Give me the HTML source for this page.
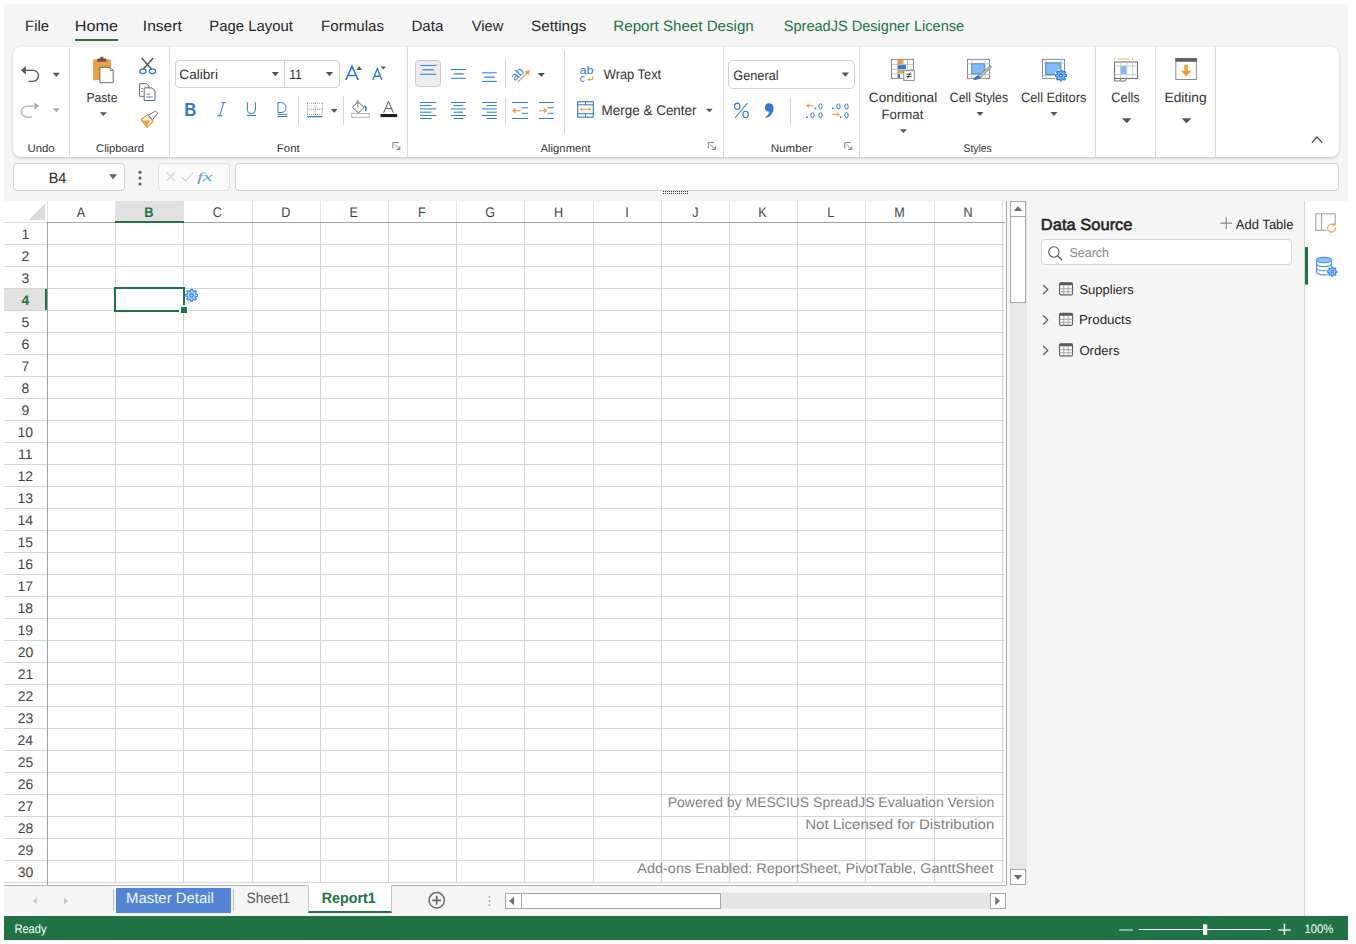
<!DOCTYPE html>
<html><head><meta charset="utf-8"><title>SpreadJS Designer</title>
<style>
html,body{margin:0;padding:0;}
body{width:1356px;height:944px;position:relative;overflow:hidden;background:#fff;font-family:"Liberation Sans",sans-serif;}
#bg>div{position:absolute;}
svg#ov{position:absolute;left:0;top:0;}
</style></head><body>
<div id="bg">
<div style="left:4px;top:4px;width:1344px;height:936px;background:#f5f5f5"></div>
<div style="left:13px;top:47px;width:1326px;height:110px;background:#fff;border-radius:8px;box-shadow:0 1px 3px rgba(0,0,0,0.22)"></div>
<div style="left:13px;top:163px;width:112px;height:28px;background:#fff;border:1px solid #cfcfcf;border-radius:4px;box-sizing:border-box"></div>
<div style="left:158px;top:163px;width:72px;height:28px;background:#fafafa;border:1px solid #e0e0e0;border-radius:4px;box-sizing:border-box"></div>
<div style="left:235px;top:163px;width:1104px;height:28px;background:#fff;border:1px solid #cfcfcf;border-radius:4px;box-sizing:border-box"></div>
<div style="left:4px;top:201px;width:1006px;height:685px;background:#fff"></div>
<div style="left:1007px;top:201px;width:3px;height:685px;background:#f9f9f9"></div>
<div style="left:1010px;top:201px;width:17px;height:684px;background:#e8e8e8"></div>
<div style="left:1305px;top:201px;width:43px;height:715px;background:#fff"></div>
<div style="left:4px;top:916px;width:1344px;height:24px;background:#217346"></div>
<div style="left:175px;top:60px;width:165px;height:28px;background:#fff;border:1px solid #cfcfcf;border-radius:4px;box-sizing:border-box"></div>
<div style="left:728px;top:60px;width:127px;height:29px;background:#fff;border:1px solid #cfcfcf;border-radius:5px;box-sizing:border-box"></div>
<div style="left:115px;top:201px;width:69px;height:20px;background:#e1e1e1"></div>
<div style="left:4px;top:289px;width:43px;height:21px;background:#e1e1e1"></div>
<div style="left:1041px;top:239px;width:251px;height:26px;background:#fff;border:1px solid #d6d6d6;border-radius:4px;box-sizing:border-box"></div>
<div style="left:116px;top:888px;width:115px;height:25px;background:#5384d6"></div>
<div style="left:308px;top:885px;width:84px;height:28px;background:#fff;border:1px solid #c6c6c6;border-top:none;border-bottom:2px solid #217346;box-sizing:border-box"></div>
<div style="left:720px;top:893px;width:280px;height:16px;background:#e6e6e6"></div>
<div style="left:505px;top:893px;width:17px;height:16px;background:#fff;border:1px solid #a6a6a6;box-sizing:border-box"></div>
<div style="left:521px;top:893px;width:200px;height:16px;background:#fff;border:1px solid #a6a6a6;box-sizing:border-box"></div>
<div style="left:990px;top:893px;width:16px;height:16px;background:#fff;border:1px solid #a6a6a6;box-sizing:border-box"></div>
<div style="left:1010px;top:201px;width:16px;height:17px;background:#fff;border:1px solid #a6a6a6;box-sizing:border-box"></div>
<div style="left:1010px;top:216px;width:16px;height:87px;background:#fff;border:1px solid #a6a6a6;box-sizing:border-box"></div>
<div style="left:1010px;top:869px;width:16px;height:16px;background:#fff;border:1px solid #a6a6a6;box-sizing:border-box"></div>
</div>
<svg id="ov" width="1356" height="944" viewBox="0 0 1356 944" font-family="Liberation Sans, sans-serif" shape-rendering="crispEdges">
<g>
<rect x="1304" y="201" width="1" height="715" fill="#d6d6d6"/>
<rect x="75" y="39" width="43" height="2" fill="#217346"/>
<rect x="69" y="47" width="1" height="110" fill="#dcdcdc"/>
<rect x="169" y="47" width="1" height="110" fill="#dcdcdc"/>
<rect x="407" y="47" width="1" height="110" fill="#dcdcdc"/>
<rect x="723" y="47" width="1" height="110" fill="#dcdcdc"/>
<rect x="859" y="47" width="1" height="110" fill="#dcdcdc"/>
<rect x="1095" y="47" width="1" height="110" fill="#dcdcdc"/>
<rect x="1155" y="47" width="1" height="110" fill="#dcdcdc"/>
<rect x="1215" y="47" width="1" height="110" fill="#dcdcdc"/>
<rect x="284" y="60" width="1" height="28" fill="#cfcfcf"/>
<rect x="47" y="244" width="958" height="1" fill="#d4d4d4"/>
<rect x="4" y="244" width="43" height="1" fill="#d4d4d4"/>
<rect x="47" y="266" width="958" height="1" fill="#d4d4d4"/>
<rect x="4" y="266" width="43" height="1" fill="#d4d4d4"/>
<rect x="47" y="288" width="958" height="1" fill="#d4d4d4"/>
<rect x="4" y="288" width="43" height="1" fill="#d4d4d4"/>
<rect x="47" y="310" width="958" height="1" fill="#d4d4d4"/>
<rect x="4" y="310" width="43" height="1" fill="#d4d4d4"/>
<rect x="47" y="332" width="958" height="1" fill="#d4d4d4"/>
<rect x="4" y="332" width="43" height="1" fill="#d4d4d4"/>
<rect x="47" y="354" width="958" height="1" fill="#d4d4d4"/>
<rect x="4" y="354" width="43" height="1" fill="#d4d4d4"/>
<rect x="47" y="376" width="958" height="1" fill="#d4d4d4"/>
<rect x="4" y="376" width="43" height="1" fill="#d4d4d4"/>
<rect x="47" y="398" width="958" height="1" fill="#d4d4d4"/>
<rect x="4" y="398" width="43" height="1" fill="#d4d4d4"/>
<rect x="47" y="420" width="958" height="1" fill="#d4d4d4"/>
<rect x="4" y="420" width="43" height="1" fill="#d4d4d4"/>
<rect x="47" y="442" width="958" height="1" fill="#d4d4d4"/>
<rect x="4" y="442" width="43" height="1" fill="#d4d4d4"/>
<rect x="47" y="464" width="958" height="1" fill="#d4d4d4"/>
<rect x="4" y="464" width="43" height="1" fill="#d4d4d4"/>
<rect x="47" y="486" width="958" height="1" fill="#d4d4d4"/>
<rect x="4" y="486" width="43" height="1" fill="#d4d4d4"/>
<rect x="47" y="508" width="958" height="1" fill="#d4d4d4"/>
<rect x="4" y="508" width="43" height="1" fill="#d4d4d4"/>
<rect x="47" y="530" width="958" height="1" fill="#d4d4d4"/>
<rect x="4" y="530" width="43" height="1" fill="#d4d4d4"/>
<rect x="47" y="552" width="958" height="1" fill="#d4d4d4"/>
<rect x="4" y="552" width="43" height="1" fill="#d4d4d4"/>
<rect x="47" y="574" width="958" height="1" fill="#d4d4d4"/>
<rect x="4" y="574" width="43" height="1" fill="#d4d4d4"/>
<rect x="47" y="596" width="958" height="1" fill="#d4d4d4"/>
<rect x="4" y="596" width="43" height="1" fill="#d4d4d4"/>
<rect x="47" y="618" width="958" height="1" fill="#d4d4d4"/>
<rect x="4" y="618" width="43" height="1" fill="#d4d4d4"/>
<rect x="47" y="640" width="958" height="1" fill="#d4d4d4"/>
<rect x="4" y="640" width="43" height="1" fill="#d4d4d4"/>
<rect x="47" y="662" width="958" height="1" fill="#d4d4d4"/>
<rect x="4" y="662" width="43" height="1" fill="#d4d4d4"/>
<rect x="47" y="684" width="958" height="1" fill="#d4d4d4"/>
<rect x="4" y="684" width="43" height="1" fill="#d4d4d4"/>
<rect x="47" y="706" width="958" height="1" fill="#d4d4d4"/>
<rect x="4" y="706" width="43" height="1" fill="#d4d4d4"/>
<rect x="47" y="728" width="958" height="1" fill="#d4d4d4"/>
<rect x="4" y="728" width="43" height="1" fill="#d4d4d4"/>
<rect x="47" y="750" width="958" height="1" fill="#d4d4d4"/>
<rect x="4" y="750" width="43" height="1" fill="#d4d4d4"/>
<rect x="47" y="772" width="958" height="1" fill="#d4d4d4"/>
<rect x="4" y="772" width="43" height="1" fill="#d4d4d4"/>
<rect x="47" y="794" width="958" height="1" fill="#d4d4d4"/>
<rect x="4" y="794" width="43" height="1" fill="#d4d4d4"/>
<rect x="47" y="816" width="958" height="1" fill="#d4d4d4"/>
<rect x="4" y="816" width="43" height="1" fill="#d4d4d4"/>
<rect x="47" y="838" width="958" height="1" fill="#d4d4d4"/>
<rect x="4" y="838" width="43" height="1" fill="#d4d4d4"/>
<rect x="47" y="860" width="958" height="1" fill="#d4d4d4"/>
<rect x="4" y="860" width="43" height="1" fill="#d4d4d4"/>
<rect x="47" y="882" width="958" height="1" fill="#d4d4d4"/>
<rect x="4" y="882" width="43" height="1" fill="#d4d4d4"/>
<rect x="115" y="222" width="1" height="661" fill="#d4d4d4"/>
<rect x="115" y="201" width="1" height="21" fill="#e4e4e4"/>
<rect x="183" y="222" width="1" height="661" fill="#d4d4d4"/>
<rect x="183" y="201" width="1" height="21" fill="#e4e4e4"/>
<rect x="252" y="222" width="1" height="661" fill="#d4d4d4"/>
<rect x="252" y="201" width="1" height="21" fill="#e4e4e4"/>
<rect x="320" y="222" width="1" height="661" fill="#d4d4d4"/>
<rect x="320" y="201" width="1" height="21" fill="#e4e4e4"/>
<rect x="388" y="222" width="1" height="661" fill="#d4d4d4"/>
<rect x="388" y="201" width="1" height="21" fill="#e4e4e4"/>
<rect x="456" y="222" width="1" height="661" fill="#d4d4d4"/>
<rect x="456" y="201" width="1" height="21" fill="#e4e4e4"/>
<rect x="524" y="222" width="1" height="661" fill="#d4d4d4"/>
<rect x="524" y="201" width="1" height="21" fill="#e4e4e4"/>
<rect x="593" y="222" width="1" height="661" fill="#d4d4d4"/>
<rect x="593" y="201" width="1" height="21" fill="#e4e4e4"/>
<rect x="661" y="222" width="1" height="661" fill="#d4d4d4"/>
<rect x="661" y="201" width="1" height="21" fill="#e4e4e4"/>
<rect x="729" y="222" width="1" height="661" fill="#d4d4d4"/>
<rect x="729" y="201" width="1" height="21" fill="#e4e4e4"/>
<rect x="797" y="222" width="1" height="661" fill="#d4d4d4"/>
<rect x="797" y="201" width="1" height="21" fill="#e4e4e4"/>
<rect x="865" y="222" width="1" height="661" fill="#d4d4d4"/>
<rect x="865" y="201" width="1" height="21" fill="#e4e4e4"/>
<rect x="934" y="222" width="1" height="661" fill="#d4d4d4"/>
<rect x="934" y="201" width="1" height="21" fill="#e4e4e4"/>
<rect x="1002" y="222" width="1" height="661" fill="#d4d4d4"/>
<rect x="1002" y="201" width="1" height="21" fill="#e4e4e4"/>
<rect x="4" y="222" width="43" height="1" fill="#d8d8d8"/>
<rect x="47" y="222" width="958" height="1" fill="#a0a0a0"/>
<rect x="47" y="222" width="1" height="663" fill="#a0a0a0"/>
<rect x="47" y="201" width="1" height="21" fill="#e4e4e4"/>
<rect x="115" y="221" width="69" height="2" fill="#217346"/>
<rect x="45" y="289" width="2" height="21" fill="#217346"/>
<rect x="1006" y="201" width="1" height="685" fill="#a6a6a6"/>
<rect x="4" y="885" width="304" height="1" fill="#b4b4b4"/>
<rect x="392" y="885" width="615" height="1" fill="#b4b4b4"/>
<polygon points="28,220 45,220 45,203" fill="#dcdcdc"/>
<rect x="115" y="288" width="69" height="23" fill="none" stroke="#217346" stroke-width="2"/>
<rect x="179" y="305" width="9" height="9" fill="#fff"/>
<rect x="181" y="307" width="6" height="6" fill="#217346"/>
<rect x="113" y="889" width="1" height="22" fill="#bdbdbd"/>
<rect x="233" y="889" width="1" height="22" fill="#bdbdbd"/>
</g>
<g shape-rendering="geometricPrecision">
<path d="M25.6,70.3 H33 A5.5,5.5 0 0 1 33,81.3 H28.4" fill="none" stroke="#555555" stroke-width="1.3"/>
<polygon points="21,70.3 25.8,66.2 25.8,74.4" fill="#555555"/>
<polygon points="52.75,72.7 59.75,72.7 56.25,76.9" fill="#555555"/>
<path d="M34.6,106.1 H27 A5.55,5.55 0 0 0 27,117.2 H32.2" fill="none" stroke="#a8aeb1" stroke-width="1.3"/>
<polygon points="39.3,106.1 34.5,102.2 34.5,110" fill="#a8aeb1"/>
<polygon points="52.75,108.2 59.75,108.2 56.25,112.2" fill="#a8aeb1"/>
<rect x="93.1" y="59.2" width="17.9" height="21" rx="1.5" fill="#eda03f"/>
<rect x="97.3" y="58.6" width="9" height="3" fill="#555555"/>
<rect x="100.3" y="56.8" width="3" height="2.5" fill="#555555"/>
<path d="M99.9,67.3 H110 L113.2,70.5 V82.7 H99.9 Z" fill="#fff" stroke="#6b6b6b" stroke-width="1"/>
<path d="M110,67.3 V70.5 H113.2" fill="none" stroke="#6b6b6b" stroke-width="0.8"/>
<polygon points="99.8,112.2 106.8,112.2 103.3,116.10000000000001" fill="#555555"/>
<path d="M141.6,58 L151.8,69.5 M153.2,58 L143,69.5" stroke="#555555" stroke-width="1.5"/>
<ellipse cx="142.9" cy="71.2" rx="3.1" ry="2.4" fill="none" stroke="#2e7bcf" stroke-width="1.3"/>
<ellipse cx="152.5" cy="71.2" rx="3.1" ry="2.4" fill="none" stroke="#2e7bcf" stroke-width="1.3"/>
<path d="M139.5,83.7 H146.5 L149,86.2 V96.3 H139.5 Z" fill="#fff" stroke="#6b6b6b" stroke-width="1"/>
<path d="M144.2,87.9 H152 L155,90.9 V100.5 H144.2 Z" fill="#fff" stroke="#6b6b6b" stroke-width="1"/>
<path d="M141.3,88.5 H143 M141.3,91.5 H143 M146.3,94.2 H150 M146.3,97 H152.5" stroke="#2e7bcf" stroke-width="0.9"/>
<path d="M141.2,119.5 L147.8,114.8 L153,121.3 L147,127.4 Z" fill="#fff" stroke="#eda03f" stroke-width="1.3" stroke-linejoin="round"/>
<path d="M142.5,120.5 L150.5,120.5 L147,126.5 Z" fill="#eda03f"/>
<path d="M148.3,115.3 L152.5,119.8 L157.8,113 L155.6,111 Z" fill="#fff" stroke="#777" stroke-width="1"/>
<polygon points="271.7,71.9 278.90000000000003,71.9 275.3,76.2" fill="#555555"/>
<polygon points="325.9,71.9 333.1,71.9 329.5,76.2" fill="#555555"/>
<path d="M345.8,80 L352,66.3 L358.2,80 M347.8,75.5 H356.2" fill="none" stroke="#2e7bcf" stroke-width="1.6"/>
<polygon points="356.6,70 359.3,66.1 362,70" fill="#555555"/>
<path d="M372.8,80 L377.3,68.6 L381.8,80 M374.2,76.2 H380.4" fill="none" stroke="#2e7bcf" stroke-width="1.4"/>
<polygon points="380.5,66.4 386,66.4 383.25,69.6" fill="#555555"/>
<text x="184.2" y="116.2" font-size="19" font-weight="bold" fill="#2e7bcf" textLength="12" lengthAdjust="spacingAndGlyphs">B</text>
<path d="M223.8,102.6 L219.6,115.8 M221.2,102.6 H226.2 M217.3,115.8 H222.2" fill="none" stroke="#2e7bcf" stroke-width="1"/>
<path d="M247.4,102.3 V109.8 A4,4 0 0 0 255.4,109.8 V102.3 M246.8,115.5 H256" fill="none" stroke="#2e7bcf" stroke-width="1"/>
<path d="M278,102.6 H281.5 A5.2,5 0 0 1 281.5,112.5 H278 Z M277.6,114.3 H287.2 M277.6,116.5 H287.2" fill="none" stroke="#2e7bcf" stroke-width="1"/>
<g fill="#9a9a9a"><rect x="307" y="102.7" width="1" height="1"/><rect x="307" y="108.7" width="1" height="1"/><rect x="307" y="114" width="1" height="1"/><rect x="309" y="102.7" width="1" height="1"/><rect x="309" y="108.7" width="1" height="1"/><rect x="309" y="114" width="1" height="1"/><rect x="311" y="102.7" width="1" height="1"/><rect x="311" y="108.7" width="1" height="1"/><rect x="311" y="114" width="1" height="1"/><rect x="313" y="102.7" width="1" height="1"/><rect x="313" y="108.7" width="1" height="1"/><rect x="313" y="114" width="1" height="1"/><rect x="315" y="102.7" width="1" height="1"/><rect x="315" y="108.7" width="1" height="1"/><rect x="315" y="114" width="1" height="1"/><rect x="317" y="102.7" width="1" height="1"/><rect x="317" y="108.7" width="1" height="1"/><rect x="317" y="114" width="1" height="1"/><rect x="319" y="102.7" width="1" height="1"/><rect x="319" y="108.7" width="1" height="1"/><rect x="319" y="114" width="1" height="1"/><rect x="321" y="102.7" width="1" height="1"/><rect x="321" y="108.7" width="1" height="1"/><rect x="321" y="114" width="1" height="1"/><rect x="307" y="102.7" width="1" height="1"/><rect x="314.5" y="102.7" width="1" height="1"/><rect x="322" y="102.7" width="1" height="1"/><rect x="307" y="104.7" width="1" height="1"/><rect x="314.5" y="104.7" width="1" height="1"/><rect x="322" y="104.7" width="1" height="1"/><rect x="307" y="106.7" width="1" height="1"/><rect x="314.5" y="106.7" width="1" height="1"/><rect x="322" y="106.7" width="1" height="1"/><rect x="307" y="108.7" width="1" height="1"/><rect x="314.5" y="108.7" width="1" height="1"/><rect x="322" y="108.7" width="1" height="1"/><rect x="307" y="110.7" width="1" height="1"/><rect x="314.5" y="110.7" width="1" height="1"/><rect x="322" y="110.7" width="1" height="1"/><rect x="307" y="112.7" width="1" height="1"/><rect x="314.5" y="112.7" width="1" height="1"/><rect x="322" y="112.7" width="1" height="1"/></g>
<rect x="307" y="116" width="15.5" height="1.3" fill="#2e7bcf"/>
<polygon points="330.90000000000003,109 337.7,109 334.3,112.8" fill="#555555"/>
<rect x="298" y="96.5" width="1" height="28.200000000000003" fill="#d6d6d6"/>
<rect x="343" y="96.5" width="1" height="28.200000000000003" fill="#d6d6d6"/>
<path d="M352.5,107.2 L358,101.8 L364,107.5 L358.5,113 Z" fill="#fff" stroke="#666" stroke-width="1"/>
<circle cx="357.5" cy="101.8" r="1.3" fill="none" stroke="#888" stroke-width="0.8"/><path d="M357.8,102.5 V107" stroke="#666" stroke-width="0.8"/>
<path d="M364,106.5 Q366.5,105.5 365.8,111" fill="none" stroke="#2e7bcf" stroke-width="1.6"/>
<rect x="351.6" y="113.5" width="17.6" height="3.8" fill="#fff" stroke="#b5b5b5" stroke-width="1"/>
<path d="M383.6,112.8 L388.5,101.4 L393.4,112.8 M385.3,108.6 H391.7" fill="none" stroke="#555" stroke-width="1"/>
<rect x="380.6" y="114" width="16.6" height="3.1" fill="#1d1d25"/>
<path d="M392.8,148.5 V142.5 H398.8" fill="none" stroke="#777" stroke-width="0.9"/><path d="M394.8,144.5 L399.8,149.5 M399.8,146.0 V149.5 H396.3" fill="none" stroke="#777" stroke-width="0.9"/>
<path d="M708.3,148.5 V142.5 H714.3" fill="none" stroke="#777" stroke-width="0.9"/><path d="M710.3,144.5 L715.3,149.5 M715.3,146.0 V149.5 H711.8" fill="none" stroke="#777" stroke-width="0.9"/>
<path d="M844.8,148.5 V142.5 H850.8" fill="none" stroke="#777" stroke-width="0.9"/><path d="M846.8,144.5 L851.8,149.5 M851.8,146.0 V149.5 H848.3" fill="none" stroke="#777" stroke-width="0.9"/>
<rect x="415.5" y="60.5" width="25" height="26" rx="3.5" fill="#ececec" stroke="#c9c9c9" stroke-width="1"/>
<rect x="420" y="64.9" width="16.30000000000001" height="1.0" fill="#2e7bcf"/>
<rect x="422.4" y="69.1" width="11.400000000000034" height="1.4" fill="#4a8ad6"/>
<rect x="420" y="73.75" width="16.30000000000001" height="1.0" fill="#2e7bcf"/>
<rect x="450.9" y="69.0" width="15.0" height="1.0" fill="#2e7bcf"/>
<rect x="453.4" y="73.2" width="10.300000000000011" height="1.4" fill="#4a8ad6"/>
<rect x="450.9" y="77.8" width="15.0" height="1.0" fill="#2e7bcf"/>
<rect x="481.9" y="72.3" width="14.900000000000034" height="1.0" fill="#2e7bcf"/>
<rect x="484.3" y="76.5" width="10.300000000000011" height="1.4" fill="#4a8ad6"/>
<rect x="481.9" y="80.9" width="14.900000000000034" height="1.0" fill="#2e7bcf"/>
<rect x="505" y="60.2" width="1" height="28.39999999999999" fill="#d6d6d6"/>
<rect x="505" y="97.2" width="1" height="26.299999999999997" fill="#d6d6d6"/>
<rect x="564" y="51" width="1" height="82" fill="#d6d6d6"/>
<text x="0" y="0" font-size="12" fill="#2e7bcf" transform="translate(515.3,81.5) rotate(-45)">ab</text>
<path d="M517.9,82 L529,71" stroke="#eda03f" stroke-width="1.1"/><polygon points="530,70 524.8,71.4 528.6,75.2" fill="#eda03f"/>
<polygon points="537.8,73.1 544.8,73.1 541.3,77.0" fill="#555555"/>
<rect x="420" y="102.0" width="16.30000000000001" height="1.0" fill="#2e7bcf"/>
<rect x="450.9" y="102.0" width="15.0" height="1.0" fill="#2e7bcf"/>
<rect x="481.9" y="102.0" width="14.900000000000034" height="1.0" fill="#2e7bcf"/>
<rect x="420" y="105.1" width="11.600000000000023" height="1.0" fill="#2e7bcf"/>
<rect x="453.6" y="105.1" width="9.599999999999966" height="1.0" fill="#2e7bcf"/>
<rect x="486.6" y="105.1" width="10.199999999999989" height="1.0" fill="#2e7bcf"/>
<rect x="420" y="108.4" width="16.30000000000001" height="1.0" fill="#2e7bcf"/>
<rect x="450.9" y="108.4" width="15.0" height="1.0" fill="#2e7bcf"/>
<rect x="481.9" y="108.4" width="14.900000000000034" height="1.0" fill="#2e7bcf"/>
<rect x="420" y="111.7" width="11.600000000000023" height="1.0" fill="#2e7bcf"/>
<rect x="453.6" y="111.7" width="9.599999999999966" height="1.0" fill="#2e7bcf"/>
<rect x="486.6" y="111.7" width="10.199999999999989" height="1.0" fill="#2e7bcf"/>
<rect x="420" y="115.0" width="16.30000000000001" height="1.0" fill="#2e7bcf"/>
<rect x="450.9" y="115.0" width="15.0" height="1.0" fill="#2e7bcf"/>
<rect x="481.9" y="115.0" width="14.900000000000034" height="1.0" fill="#2e7bcf"/>
<rect x="420" y="118.0" width="11.600000000000023" height="1.0" fill="#2e7bcf"/>
<rect x="453.6" y="118.0" width="9.599999999999966" height="1.0" fill="#2e7bcf"/>
<rect x="486.6" y="118.0" width="10.199999999999989" height="1.0" fill="#2e7bcf"/>
<rect x="512" y="102.0" width="16.100000000000023" height="1.0" fill="#2e7bcf"/>
<rect x="512" y="118.0" width="16.100000000000023" height="1.0" fill="#2e7bcf"/>
<rect x="521.7" y="107.3" width="6.399999999999977" height="1.0" fill="#2e7bcf"/>
<rect x="521.7" y="112.8" width="6.399999999999977" height="1.0" fill="#2e7bcf"/>
<path d="M513,110.7 H520.5" stroke="#eda03f" stroke-width="1.2"/><polygon points="512,110.7 515.5,107.8 515.5,113.6" fill="#eda03f"/>
<rect x="538.9" y="102.0" width="14.899999999999977" height="1.0" fill="#2e7bcf"/>
<rect x="538.9" y="118.0" width="14.899999999999977" height="1.0" fill="#2e7bcf"/>
<rect x="547.7" y="107.3" width="6.099999999999909" height="1.0" fill="#2e7bcf"/>
<rect x="547.7" y="112.8" width="6.099999999999909" height="1.0" fill="#2e7bcf"/>
<path d="M539,110.7 H546" stroke="#eda03f" stroke-width="1.2"/><polygon points="547.3,110.7 543.8,107.8 543.8,113.6" fill="#eda03f"/>
<text x="579.6" y="73.8" font-size="10" fill="#2e7bcf" textLength="14" lengthAdjust="spacingAndGlyphs">ab</text>
<text x="579.8" y="81.6" font-size="10" fill="#2e7bcf">c</text>
<path d="M592.7,76.2 V79.6 H588" fill="none" stroke="#eda03f" stroke-width="1"/><polygon points="587.4,79.6 589.6,77.8 589.6,81.4" fill="#eda03f"/>
<rect x="577.7" y="101.7" width="15.6" height="15.5" fill="#fff" stroke="#2e7bcf" stroke-width="1.1"/>
<path d="M577.7,104.8 H593.3 M577.7,113.7 H593.3 M585.5,101.7 V104.8 M585.5,113.7 V117.2" stroke="#2e7bcf" stroke-width="1"/>
<path d="M581,109.3 H590" stroke="#eda03f" stroke-width="1.1"/><polygon points="579.6,109.3 582.2,107.3 582.2,111.3" fill="#eda03f"/><polygon points="591.4,109.3 588.8,107.3 588.8,111.3" fill="#eda03f"/>
<polygon points="705.9499999999999,108.7 712.65,108.7 709.3,112.2" fill="#555555"/>
<polygon points="841.5999999999999,72.6 849.0,72.6 845.3,76.8" fill="#555555"/>
<path d="M735,118 L747.5,103" stroke="#2e7bcf" stroke-width="1.1"/><ellipse cx="737.2" cy="106.3" rx="2.7" ry="3.2" fill="none" stroke="#2e7bcf" stroke-width="1.1"/><ellipse cx="745.6" cy="114.4" rx="2.7" ry="3.2" fill="none" stroke="#2e7bcf" stroke-width="1.1"/>
<path d="M769,103.2 C774,103.2 774.5,109 772.5,112.5 C771,115.5 768.5,117.5 766,118 L765.5,117 C767.5,115.8 769,114 769.3,111.5 C766,111.5 764.8,109.5 764.8,107.4 C764.8,105 766.5,103.2 769,103.2 Z" fill="#2e7bcf"/>
<rect x="790" y="97.2" width="1" height="26.599999999999994" fill="#d6d6d6"/>
<path d="M807.5,105.8 H813.5" stroke="#eda03f" stroke-width="1.1"/><polygon points="806.1,105.8 808.8,103.6 808.8,108" fill="#eda03f"/>
<rect x="814.7" y="107.5" width="1.6" height="1.6" fill="#2e7bcf"/>
<ellipse cx="820.5" cy="106.4" rx="1.7" ry="2.6" fill="none" stroke="#2e7bcf" stroke-width="1"/>
<rect x="806.1" y="116.4" width="1.6" height="1.6" fill="#2e7bcf"/>
<ellipse cx="812.5" cy="115.2" rx="1.7" ry="2.6" fill="none" stroke="#2e7bcf" stroke-width="1"/>
<ellipse cx="820.5" cy="115.2" rx="1.7" ry="2.6" fill="none" stroke="#2e7bcf" stroke-width="1"/>
<rect x="832.0" y="107.5" width="1.6" height="1.6" fill="#2e7bcf"/>
<ellipse cx="838.5" cy="106.4" rx="1.7" ry="2.6" fill="none" stroke="#2e7bcf" stroke-width="1"/>
<ellipse cx="846.5" cy="106.4" rx="1.7" ry="2.6" fill="none" stroke="#2e7bcf" stroke-width="1"/>
<path d="M832,114.4 H838" stroke="#eda03f" stroke-width="1.1"/><polygon points="840,114.4 837.3,112.2 837.3,116.6" fill="#eda03f"/>
<rect x="840.0" y="116.4" width="1.6" height="1.6" fill="#2e7bcf"/>
<ellipse cx="846.5" cy="115.2" rx="1.7" ry="2.6" fill="none" stroke="#2e7bcf" stroke-width="1"/>
<rect x="891.5" y="59.4" width="22" height="19" fill="#fff"/>
<rect x="897" y="59.4" width="6.5" height="4.8" fill="#eda03f"/><rect x="897" y="64.2" width="9" height="4.9" fill="#2e7bcf"/><rect x="897" y="69.1" width="7" height="4.3" fill="#eda03f"/><rect x="897" y="73.4" width="3" height="5" fill="#2e7bcf"/>
<rect x="897" y="59.4" width="0.9" height="19.000000000000007" fill="#c4c4c4"/>
<rect x="907" y="59.4" width="0.9" height="19.000000000000007" fill="#c4c4c4"/>
<rect x="891.5" y="64.2" width="22.0" height="0.9" fill="#c4c4c4"/>
<rect x="891.5" y="69.1" width="22.0" height="0.9" fill="#c4c4c4"/>
<rect x="891.5" y="73.4" width="22.0" height="0.9" fill="#c4c4c4"/>
<rect x="891.5" y="59.4" width="22" height="19" fill="none" stroke="#8a8a8a" stroke-width="1"/>
<rect x="903.8" y="70.7" width="10.5" height="9.7" fill="#fff" stroke="#8a8a8a" stroke-width="1"/>
<path d="M906.5,74.2 H911.5 M906.5,76.5 H911.5 M910.5,72.5 L907.5,78.5" stroke="#333" stroke-width="0.9"/>
<polygon points="899.9,129.2 906.9,129.2 903.4,133.1" fill="#555555"/>
<rect x="967.5" y="59.4" width="22" height="19" fill="#fff" stroke="#8a8a8a" stroke-width="1"/>
<rect x="971.4" y="59.4" width="0.9" height="19.000000000000007" fill="#c4c4c4"/>
<rect x="984.7" y="59.4" width="0.9" height="19.000000000000007" fill="#c4c4c4"/>
<rect x="967.5" y="63.4" width="22.0" height="0.9" fill="#c4c4c4"/>
<rect x="967.5" y="74.1" width="22.0" height="0.9" fill="#c4c4c4"/>
<rect x="971.8" y="63.8" width="12.5" height="10" fill="#7dbcf5" stroke="#3f82d8" stroke-width="0.9"/>
<path d="M990.5,65.5 L980.5,74 L978.5,76 L981,77.5 L991.5,67 Z" fill="#bdbdbd" stroke="#777" stroke-width="0.8"/>
<path d="M978,75 Q975,76.5 973,79.6 Q977.5,80.8 980.5,77.5 Z" fill="#2e7bcf"/>
<polygon points="976.5,112 983.5,112 980,115.9" fill="#555555"/>
<rect x="1042.5" y="59.4" width="22" height="19" fill="#fff" stroke="#8a8a8a" stroke-width="1"/>
<rect x="1045.4" y="59.4" width="0.9" height="19.000000000000007" fill="#c4c4c4"/>
<rect x="1060.7" y="59.4" width="0.9" height="19.000000000000007" fill="#c4c4c4"/>
<rect x="1042.5" y="62.5" width="22.0" height="0.9" fill="#c4c4c4"/>
<rect x="1042.5" y="75" width="22.0" height="0.9" fill="#c4c4c4"/>
<rect x="1045.8" y="62.9" width="14.5" height="11.7" fill="#7dbcf5" stroke="#3f82d8" stroke-width="0.9"/>
<circle cx="1061" cy="75.5" r="6.5" fill="#fff"/>
<path d="M1064.85,74.41 L1066.54,74.66 L1066.54,76.34 L1064.85,76.59 L1064.49,77.45 L1065.51,78.82 L1064.32,80.01 L1062.95,78.99 L1062.09,79.35 L1061.84,81.04 L1060.16,81.04 L1059.91,79.35 L1059.05,78.99 L1057.68,80.01 L1056.49,78.82 L1057.51,77.45 L1057.15,76.59 L1055.46,76.34 L1055.46,74.66 L1057.15,74.41 L1057.51,73.55 L1056.49,72.18 L1057.68,70.99 L1059.05,72.01 L1059.91,71.65 L1060.16,69.96 L1061.84,69.96 L1062.09,71.65 L1062.95,72.01 L1064.32,70.99 L1065.51,72.18 L1064.49,73.55Z" fill="#7dbcf5" stroke="#2e7bcf" stroke-width="1.1" stroke-linejoin="round"/>
<circle cx="1061" cy="75.5" r="1.6" fill="none" stroke="#2e7bcf" stroke-width="1.1"/>
<polygon points="1050.5,112 1057.5,112 1054,115.9" fill="#555555"/>
<rect x="1114.5" y="62" width="23" height="16.5" fill="#fff" stroke="#6e6e6e" stroke-width="1.1"/>
<rect x="1120.5" y="65.8" width="6" height="8.5" fill="#7dbcf5"/>
<rect x="1120.2" y="62" width="0.9" height="16.5" fill="#c6c6c6"/>
<rect x="1126.3" y="62" width="0.9" height="16.5" fill="#c6c6c6"/>
<rect x="1132.3" y="62" width="0.9" height="16.5" fill="#c6c6c6"/>
<rect x="1114.5" y="65.6" width="23.0" height="0.9" fill="#c6c6c6"/>
<rect x="1114.5" y="74.3" width="23.0" height="0.9" fill="#c6c6c6"/>
<path d="M1114.5,78 V81 H1119.5 L1121,78.6 M1120,81 H1125 L1126.5,78.6" fill="none" stroke="#6e6e6e" stroke-width="1"/>
<rect x="1117.2" y="58.3" width="12" height="1.4" fill="#f3c982"/><rect x="1113.8" y="58.2" width="1.2" height="1.6" fill="#eda03f"/><rect x="1132" y="58.2" width="1.2" height="1.6" fill="#eda03f"/>
<polygon points="1121.9,118.3 1131.5,118.3 1126.7,123.3" fill="#555555"/>
<rect x="1175.8" y="58.5" width="20.6" height="21" fill="#fff" stroke="#8d8d8d" stroke-width="1"/>
<rect x="1175.4" y="58.1" width="21.4" height="3.7" fill="#655f63"/>
<rect x="1184.3" y="64.8" width="3.6" height="6.2" fill="#eda03f"/><polygon points="1180.8,70.8 1191.6,70.8 1186.2,76.6" fill="#eda03f"/>
<polygon points="1181.7,118.3 1191.3,118.3 1186.5,123.3" fill="#555555"/>
<path d="M1311.9,142.6 L1317,137 L1322.1,142.6" fill="none" stroke="#444" stroke-width="1.2"/>
<polygon points="109.0,174.3 117.0,174.3 113,179.3" fill="#666"/>
<circle cx="140" cy="172.2" r="1.5" fill="#555"/>
<circle cx="140" cy="178" r="1.5" fill="#555"/>
<circle cx="140" cy="183.9" r="1.5" fill="#555"/>
<path d="M166.2,172.3 L175,181 M175,172.3 L166.2,181" stroke="#d5d5d5" stroke-width="1.2"/>
<path d="M181.5,177 L185.5,181 L193.2,172.5" fill="none" stroke="#d5d5d5" stroke-width="1.2"/>
<text x="197" y="180.6" font-family="Liberation Serif" font-style="italic" font-size="13.5" fill="#6aa0dc" textLength="15.5" lengthAdjust="spacingAndGlyphs">fx</text>
<g fill="#333"><rect x="663" y="191" width="1" height="1"/><rect x="663" y="193" width="1" height="1"/><rect x="665" y="191" width="1" height="1"/><rect x="665" y="193" width="1" height="1"/><rect x="667" y="191" width="1" height="1"/><rect x="667" y="193" width="1" height="1"/><rect x="669" y="191" width="1" height="1"/><rect x="669" y="193" width="1" height="1"/><rect x="671" y="191" width="1" height="1"/><rect x="671" y="193" width="1" height="1"/><rect x="673" y="191" width="1" height="1"/><rect x="673" y="193" width="1" height="1"/><rect x="675" y="191" width="1" height="1"/><rect x="675" y="193" width="1" height="1"/><rect x="677" y="191" width="1" height="1"/><rect x="677" y="193" width="1" height="1"/><rect x="679" y="191" width="1" height="1"/><rect x="679" y="193" width="1" height="1"/><rect x="681" y="191" width="1" height="1"/><rect x="681" y="193" width="1" height="1"/><rect x="683" y="191" width="1" height="1"/><rect x="683" y="193" width="1" height="1"/><rect x="685" y="191" width="1" height="1"/><rect x="685" y="193" width="1" height="1"/><rect x="687" y="191" width="1" height="1"/><rect x="687" y="193" width="1" height="1"/></g>
<circle cx="191.6" cy="295.3" r="6.5" fill="#fff"/>
<path d="M195.83,294.10 L197.53,294.40 L197.53,296.20 L195.83,296.50 L195.44,297.44 L196.43,298.86 L195.16,300.13 L193.74,299.14 L192.80,299.53 L192.50,301.23 L190.70,301.23 L190.40,299.53 L189.46,299.14 L188.04,300.13 L186.77,298.86 L187.76,297.44 L187.37,296.50 L185.67,296.20 L185.67,294.40 L187.37,294.10 L187.76,293.16 L186.77,291.74 L188.04,290.47 L189.46,291.46 L190.40,291.07 L190.70,289.37 L192.50,289.37 L192.80,291.07 L193.74,291.46 L195.16,290.47 L196.43,291.74 L195.44,293.16Z" fill="#9fd0ff" stroke="#3b86e0" stroke-width="1.1" stroke-linejoin="round"/>
<circle cx="191.6" cy="295.3" r="1.7" fill="none" stroke="#3b86e0" stroke-width="1.1"/>
<polygon points="1013.8,211 1022.2,211 1018,206" fill="#6d6d6d"/>
<polygon points="1013.8,875 1022.2,875 1018,880" fill="#6d6d6d"/>
<polygon points="514,896.8 514,905.2 509.2,901" fill="#6d6d6d"/>
<polygon points="995.3,896.8 995.3,905.2 1000,901" fill="#6d6d6d"/>
<polygon points="36.8,897.5 36.8,904.5 32.7,901" fill="#c8c8c8"/>
<polygon points="64,897.5 64,904.5 68.1,901" fill="#c8c8c8"/>
<circle cx="436.7" cy="900.3" r="7.7" fill="none" stroke="#6a6a6a" stroke-width="1.5"/><path d="M432.2,900.3 H441.2 M436.7,895.8 V904.8" stroke="#6a6a6a" stroke-width="1.7"/>
<rect x="488.6" y="896.0" width="1.6" height="1.6" fill="#a0a0a0"/>
<rect x="488.6" y="900.2" width="1.6" height="1.6" fill="#a0a0a0"/>
<rect x="488.6" y="904.4000000000001" width="1.6" height="1.6" fill="#a0a0a0"/>
<path d="M1220.5,223.2 H1232 M1226.25,217.5 V229" stroke="#8a8a8a" stroke-width="1.2"/>
<circle cx="1053.9" cy="252" r="5.2" fill="none" stroke="#555" stroke-width="1.1"/><path d="M1057.6,255.7 L1062,260" stroke="#555" stroke-width="1.2"/>
<path d="M1043.2,285 L1047.8,289.5 L1043.2,294" fill="none" stroke="#555" stroke-width="1.1"/>
<rect x="1059.5" y="282.7" width="13" height="12.2" rx="1.5" fill="#fff" stroke="#5a5a5a" stroke-width="1.1"/>
<rect x="1059.5" y="282.7" width="13" height="2.6" fill="#5a5a5a"/>
<path d="M1063.8,285.2 V294.9 M1068.2,285.2 V294.9 M1059.5,288.8 H1072.5 M1059.5,291.8 H1072.5" stroke="#9a9a9a" stroke-width="0.9"/>
<path d="M1043.2,315.5 L1047.8,320.0 L1043.2,324.5" fill="none" stroke="#555" stroke-width="1.1"/>
<rect x="1059.5" y="313.2" width="13" height="12.2" rx="1.5" fill="#fff" stroke="#5a5a5a" stroke-width="1.1"/>
<rect x="1059.5" y="313.2" width="13" height="2.6" fill="#5a5a5a"/>
<path d="M1063.8,315.7 V325.4 M1068.2,315.7 V325.4 M1059.5,319.3 H1072.5 M1059.5,322.3 H1072.5" stroke="#9a9a9a" stroke-width="0.9"/>
<path d="M1043.2,346 L1047.8,350.5 L1043.2,355" fill="none" stroke="#555" stroke-width="1.1"/>
<rect x="1059.5" y="343.7" width="13" height="12.2" rx="1.5" fill="#fff" stroke="#5a5a5a" stroke-width="1.1"/>
<rect x="1059.5" y="343.7" width="13" height="2.6" fill="#5a5a5a"/>
<path d="M1063.8,346.2 V355.9 M1068.2,346.2 V355.9 M1059.5,349.8 H1072.5 M1059.5,352.8 H1072.5" stroke="#9a9a9a" stroke-width="0.9"/>
<rect x="1315.8" y="213.8" width="19.4" height="16.5" fill="none" stroke="#9a9a9a" stroke-width="1"/><path d="M1321.6,213.8 V230.3" stroke="#9a9a9a" stroke-width="1"/>
<circle cx="1331.6" cy="228.2" r="5.6" fill="#fff"/>
<path d="M1335.5,227.5 A4,4 0 1 1 1333,224.4" fill="none" stroke="#eda03f" stroke-width="1.1"/><polygon points="1333.5,222.5 1336,225 1332.6,226" fill="#eda03f"/>
<rect x="1305" y="247" width="3" height="37.6" fill="#217346"/>
<path d="M1316.6,260 V272.5 A7.5,2.8 0 0 0 1331.4,272.5 V260" fill="#fff" stroke="#4a90e2" stroke-width="1.1"/>
<path d="M1316.6,264.2 A7.5,2.8 0 0 0 1331.4,264.2 M1316.6,268.4 A7.5,2.8 0 0 0 1331.4,268.4" fill="none" stroke="#4a90e2" stroke-width="1.1"/>
<ellipse cx="1324" cy="260" rx="7.4" ry="2.6" fill="#8cc4f8" stroke="#4a90e2" stroke-width="1.1"/>
<circle cx="1332.3" cy="271.7" r="5.4" fill="#fff"/>
<path d="M1335.47,270.80 L1336.85,271.01 L1336.85,272.39 L1335.47,272.60 L1335.18,273.31 L1336.00,274.43 L1335.03,275.40 L1333.91,274.58 L1333.20,274.87 L1332.99,276.25 L1331.61,276.25 L1331.40,274.87 L1330.69,274.58 L1329.57,275.40 L1328.60,274.43 L1329.42,273.31 L1329.13,272.60 L1327.75,272.39 L1327.75,271.01 L1329.13,270.80 L1329.42,270.09 L1328.60,268.97 L1329.57,268.00 L1330.69,268.82 L1331.40,268.53 L1331.61,267.15 L1332.99,267.15 L1333.20,268.53 L1333.91,268.82 L1335.03,268.00 L1336.00,268.97 L1335.18,270.09Z" fill="#9fd0ff" stroke="#3b86e0" stroke-width="1.1" stroke-linejoin="round"/>
<circle cx="1332.3" cy="271.7" r="1.3" fill="none" stroke="#3b86e0" stroke-width="1.1"/>
<rect x="1119.2" y="929.2" width="13.8" height="1.6" fill="#a9bfb2"/>
<rect x="1138.7" y="929" width="132" height="1" fill="#ffffff"/>
<rect x="1203" y="924.3" width="4.2" height="10.7" fill="#ffffff"/>
<rect x="1278.3" y="929" width="12.3" height="2" fill="#b8c9bf"/><rect x="1283.7" y="923.7" width="1.5" height="11.3" fill="#ffffff"/>
</g>
<g text-rendering="geometricPrecision">
<text x="25.11" y="31.00" font-size="15" fill="#262626" font-weight="normal" textLength="23.90" lengthAdjust="spacingAndGlyphs" >File</text>
<text x="74.70" y="31.00" font-size="15" fill="#262626" font-weight="normal" textLength="43.29" lengthAdjust="spacingAndGlyphs" >Home</text>
<text x="142.80" y="31.00" font-size="15" fill="#262626" font-weight="normal" textLength="39.00" lengthAdjust="spacingAndGlyphs" >Insert</text>
<text x="209.31" y="31.00" font-size="15" fill="#262626" font-weight="normal" textLength="83.58" lengthAdjust="spacingAndGlyphs" >Page Layout</text>
<text x="321.09" y="31.00" font-size="15" fill="#262626" font-weight="normal" textLength="62.90" lengthAdjust="spacingAndGlyphs" >Formulas</text>
<text x="411.49" y="31.00" font-size="15" fill="#262626" font-weight="normal" textLength="31.84" lengthAdjust="spacingAndGlyphs" >Data</text>
<text x="471.83" y="31.00" font-size="15" fill="#262626" font-weight="normal" textLength="31.57" lengthAdjust="spacingAndGlyphs" >View</text>
<text x="531.01" y="31.00" font-size="15" fill="#262626" font-weight="normal" textLength="55.30" lengthAdjust="spacingAndGlyphs" >Settings</text>
<text x="613.39" y="31.00" font-size="15" fill="#217346" font-weight="normal" textLength="140.34" lengthAdjust="spacingAndGlyphs" >Report Sheet Design</text>
<text x="783.75" y="31.00" font-size="15" fill="#217346" font-weight="normal" textLength="180.36" lengthAdjust="spacingAndGlyphs" >SpreadJS Designer License</text>
<text x="27.55" y="151.50" font-size="11" fill="#333333" font-weight="normal" textLength="27.11" lengthAdjust="spacingAndGlyphs" >Undo</text>
<text x="96.04" y="151.50" font-size="11" fill="#333333" font-weight="normal" textLength="47.99" lengthAdjust="spacingAndGlyphs" >Clipboard</text>
<text x="276.89" y="151.50" font-size="11" fill="#333333" font-weight="normal" textLength="22.78" lengthAdjust="spacingAndGlyphs" >Font</text>
<text x="540.60" y="151.50" font-size="11" fill="#333333" font-weight="normal" textLength="50.08" lengthAdjust="spacingAndGlyphs" >Alignment</text>
<text x="770.67" y="151.50" font-size="11" fill="#333333" font-weight="normal" textLength="41.43" lengthAdjust="spacingAndGlyphs" >Number</text>
<text x="963.53" y="151.50" font-size="11" fill="#333333" font-weight="normal" textLength="28.21" lengthAdjust="spacingAndGlyphs" >Styles</text>
<text x="86.43" y="101.70" font-size="13" fill="#333333" font-weight="normal" textLength="31.09" lengthAdjust="spacingAndGlyphs" >Paste</text>
<text x="603.84" y="79.40" font-size="14" fill="#333333" font-weight="normal" textLength="57.29" lengthAdjust="spacingAndGlyphs" >Wrap Text</text>
<text x="601.62" y="114.80" font-size="14" fill="#333333" font-weight="normal" textLength="94.93" lengthAdjust="spacingAndGlyphs" >Merge &amp; Center</text>
<text x="868.82" y="101.80" font-size="13.5" fill="#333333" font-weight="normal" textLength="68.42" lengthAdjust="spacingAndGlyphs" >Conditional</text>
<text x="881.44" y="119.00" font-size="13.5" fill="#333333" font-weight="normal" textLength="41.95" lengthAdjust="spacingAndGlyphs" >Format</text>
<text x="949.78" y="101.80" font-size="13.5" fill="#333333" font-weight="normal" textLength="58.33" lengthAdjust="spacingAndGlyphs" >Cell Styles</text>
<text x="1020.96" y="101.80" font-size="13.5" fill="#333333" font-weight="normal" textLength="65.36" lengthAdjust="spacingAndGlyphs" >Cell Editors</text>
<text x="1111.36" y="101.90" font-size="13.5" fill="#333333" font-weight="normal" textLength="28.36" lengthAdjust="spacingAndGlyphs" >Cells</text>
<text x="1164.50" y="101.90" font-size="13.5" fill="#333333" font-weight="normal" textLength="42.03" lengthAdjust="spacingAndGlyphs" >Editing</text>
<text x="179.32" y="79.00" font-size="13.5" fill="#333333" font-weight="normal" textLength="38.62" lengthAdjust="spacingAndGlyphs" >Calibri</text>
<text x="289.17" y="78.60" font-size="13.5" fill="#333333" font-weight="normal" textLength="12.82" lengthAdjust="spacingAndGlyphs" >11</text>
<text x="733.36" y="79.90" font-size="13.5" fill="#333333" font-weight="normal" textLength="45.20" lengthAdjust="spacingAndGlyphs" >General</text>
<text x="48.74" y="183.00" font-size="15" fill="#262626" font-weight="normal" textLength="17.66" lengthAdjust="spacingAndGlyphs" >B4</text>
<text x="76.81" y="217.00" font-size="14" fill="#444444" font-weight="normal" textLength="8.40" lengthAdjust="spacingAndGlyphs" >A</text>
<text x="144.20" y="217.00" font-size="14" fill="#217346" font-weight="bold" textLength="9.30" lengthAdjust="spacingAndGlyphs" >B</text>
<text x="212.87" y="217.00" font-size="14" fill="#444444" font-weight="normal" textLength="9.10" lengthAdjust="spacingAndGlyphs" >C</text>
<text x="281.24" y="217.00" font-size="14" fill="#444444" font-weight="normal" textLength="9.10" lengthAdjust="spacingAndGlyphs" >D</text>
<text x="349.56" y="217.00" font-size="14" fill="#444444" font-weight="normal" textLength="8.40" lengthAdjust="spacingAndGlyphs" >E</text>
<text x="417.91" y="217.00" font-size="14" fill="#444444" font-weight="normal" textLength="7.70" lengthAdjust="spacingAndGlyphs" >F</text>
<text x="485.24" y="217.00" font-size="14" fill="#444444" font-weight="normal" textLength="9.80" lengthAdjust="spacingAndGlyphs" >G</text>
<text x="553.96" y="217.00" font-size="14" fill="#444444" font-weight="normal" textLength="9.10" lengthAdjust="spacingAndGlyphs" >H</text>
<text x="625.27" y="217.00" font-size="14" fill="#444444" font-weight="normal" textLength="3.50" lengthAdjust="spacingAndGlyphs" >I</text>
<text x="692.23" y="217.00" font-size="14" fill="#444444" font-weight="normal" textLength="6.30" lengthAdjust="spacingAndGlyphs" >J</text>
<text x="758.37" y="217.00" font-size="14" fill="#444444" font-weight="normal" textLength="8.40" lengthAdjust="spacingAndGlyphs" >K</text>
<text x="827.19" y="217.00" font-size="14" fill="#444444" font-weight="normal" textLength="7.01" lengthAdjust="spacingAndGlyphs" >L</text>
<text x="894.27" y="217.00" font-size="14" fill="#444444" font-weight="normal" textLength="10.50" lengthAdjust="spacingAndGlyphs" >M</text>
<text x="963.46" y="217.00" font-size="14" fill="#444444" font-weight="normal" textLength="9.10" lengthAdjust="spacingAndGlyphs" >N</text>
<text x="21.40" y="239.00" font-size="14" fill="#444444" font-weight="normal" textLength="7.79" lengthAdjust="spacingAndGlyphs" >1</text>
<text x="21.62" y="261.00" font-size="14" fill="#444444" font-weight="normal" textLength="7.79" lengthAdjust="spacingAndGlyphs" >2</text>
<text x="21.62" y="283.00" font-size="14" fill="#444444" font-weight="normal" textLength="7.79" lengthAdjust="spacingAndGlyphs" >3</text>
<text x="21.54" y="305.00" font-size="14" fill="#217346" font-weight="bold" textLength="7.79" lengthAdjust="spacingAndGlyphs" >4</text>
<text x="21.62" y="327.00" font-size="14" fill="#444444" font-weight="normal" textLength="7.79" lengthAdjust="spacingAndGlyphs" >5</text>
<text x="21.55" y="349.00" font-size="14" fill="#444444" font-weight="normal" textLength="7.79" lengthAdjust="spacingAndGlyphs" >6</text>
<text x="21.62" y="371.00" font-size="14" fill="#444444" font-weight="normal" textLength="7.79" lengthAdjust="spacingAndGlyphs" >7</text>
<text x="21.58" y="393.00" font-size="14" fill="#444444" font-weight="normal" textLength="7.79" lengthAdjust="spacingAndGlyphs" >8</text>
<text x="21.62" y="415.00" font-size="14" fill="#444444" font-weight="normal" textLength="7.79" lengthAdjust="spacingAndGlyphs" >9</text>
<text x="17.45" y="437.00" font-size="14" fill="#444444" font-weight="normal" textLength="15.57" lengthAdjust="spacingAndGlyphs" >10</text>
<text x="18.04" y="459.00" font-size="14" fill="#444444" font-weight="normal" textLength="14.53" lengthAdjust="spacingAndGlyphs" >11</text>
<text x="17.55" y="481.00" font-size="14" fill="#444444" font-weight="normal" textLength="15.57" lengthAdjust="spacingAndGlyphs" >12</text>
<text x="17.48" y="503.00" font-size="14" fill="#444444" font-weight="normal" textLength="15.57" lengthAdjust="spacingAndGlyphs" >13</text>
<text x="17.38" y="525.00" font-size="14" fill="#444444" font-weight="normal" textLength="15.57" lengthAdjust="spacingAndGlyphs" >14</text>
<text x="17.48" y="547.00" font-size="14" fill="#444444" font-weight="normal" textLength="15.57" lengthAdjust="spacingAndGlyphs" >15</text>
<text x="17.48" y="569.00" font-size="14" fill="#444444" font-weight="normal" textLength="15.57" lengthAdjust="spacingAndGlyphs" >16</text>
<text x="17.55" y="591.00" font-size="14" fill="#444444" font-weight="normal" textLength="15.57" lengthAdjust="spacingAndGlyphs" >17</text>
<text x="17.48" y="613.00" font-size="14" fill="#444444" font-weight="normal" textLength="15.57" lengthAdjust="spacingAndGlyphs" >18</text>
<text x="17.52" y="635.00" font-size="14" fill="#444444" font-weight="normal" textLength="15.57" lengthAdjust="spacingAndGlyphs" >19</text>
<text x="17.63" y="657.00" font-size="14" fill="#444444" font-weight="normal" textLength="15.57" lengthAdjust="spacingAndGlyphs" >20</text>
<text x="17.70" y="679.00" font-size="14" fill="#444444" font-weight="normal" textLength="15.57" lengthAdjust="spacingAndGlyphs" >21</text>
<text x="17.73" y="701.00" font-size="14" fill="#444444" font-weight="normal" textLength="15.57" lengthAdjust="spacingAndGlyphs" >22</text>
<text x="17.66" y="723.00" font-size="14" fill="#444444" font-weight="normal" textLength="15.57" lengthAdjust="spacingAndGlyphs" >23</text>
<text x="17.56" y="745.00" font-size="14" fill="#444444" font-weight="normal" textLength="15.57" lengthAdjust="spacingAndGlyphs" >24</text>
<text x="17.66" y="767.00" font-size="14" fill="#444444" font-weight="normal" textLength="15.57" lengthAdjust="spacingAndGlyphs" >25</text>
<text x="17.66" y="789.00" font-size="14" fill="#444444" font-weight="normal" textLength="15.57" lengthAdjust="spacingAndGlyphs" >26</text>
<text x="17.73" y="811.00" font-size="14" fill="#444444" font-weight="normal" textLength="15.57" lengthAdjust="spacingAndGlyphs" >27</text>
<text x="17.66" y="833.00" font-size="14" fill="#444444" font-weight="normal" textLength="15.57" lengthAdjust="spacingAndGlyphs" >28</text>
<text x="17.70" y="855.00" font-size="14" fill="#444444" font-weight="normal" textLength="15.57" lengthAdjust="spacingAndGlyphs" >29</text>
<text x="17.70" y="877.00" font-size="14" fill="#444444" font-weight="normal" textLength="15.57" lengthAdjust="spacingAndGlyphs" >30</text>
<text x="667.78" y="807.00" font-size="14" fill="#7f7f7f" font-weight="normal" textLength="326.44" lengthAdjust="spacingAndGlyphs" >Powered by MESCIUS SpreadJS Evaluation Version</text>
<text x="805.20" y="829.00" font-size="14" fill="#7f7f7f" font-weight="normal" textLength="189.11" lengthAdjust="spacingAndGlyphs" >Not Licensed for Distribution</text>
<text x="637.30" y="873.00" font-size="14" fill="#7f7f7f" font-weight="normal" textLength="356.11" lengthAdjust="spacingAndGlyphs" >Add-ons Enabled: ReportSheet, PivotTable, GanttSheet</text>
<text x="1040.88" y="229.80" font-size="16" fill="#1f1f1f" font-weight="normal" textLength="91.66" lengthAdjust="spacingAndGlyphs" stroke="#1f1f1f" stroke-width="0.55">Data Source</text>
<text x="1235.80" y="229.00" font-size="13.5" fill="#262626" font-weight="normal" textLength="57.72" lengthAdjust="spacingAndGlyphs" >Add Table</text>
<text x="1069.44" y="257.40" font-size="13" fill="#8a8a8a" font-weight="normal" textLength="39.62" lengthAdjust="spacingAndGlyphs" >Search</text>
<text x="1079.41" y="293.60" font-size="13" fill="#262626" font-weight="normal" textLength="54.23" lengthAdjust="spacingAndGlyphs" >Suppliers</text>
<text x="1078.93" y="324.10" font-size="13" fill="#262626" font-weight="normal" textLength="52.55" lengthAdjust="spacingAndGlyphs" >Products</text>
<text x="1079.41" y="354.60" font-size="13" fill="#262626" font-weight="normal" textLength="40.07" lengthAdjust="spacingAndGlyphs" >Orders</text>
<text x="126.11" y="902.70" font-size="15" fill="#f4f7fc" font-weight="normal" textLength="87.67" lengthAdjust="spacingAndGlyphs" >Master Detail</text>
<text x="246.58" y="902.70" font-size="15" fill="#555555" font-weight="normal" textLength="43.53" lengthAdjust="spacingAndGlyphs" >Sheet1</text>
<text x="321.67" y="902.70" font-size="15" fill="#217346" font-weight="bold" textLength="54.04" lengthAdjust="spacingAndGlyphs" >Report1</text>
<text x="14.41" y="932.80" font-size="12.5" fill="#ffffff" font-weight="normal" textLength="32.10" lengthAdjust="spacingAndGlyphs" >Ready</text>
<text x="1304.45" y="932.80" font-size="12.5" fill="#ffffff" font-weight="normal" textLength="28.92" lengthAdjust="spacingAndGlyphs" >100%</text>
</g>
</svg>
</body></html>
